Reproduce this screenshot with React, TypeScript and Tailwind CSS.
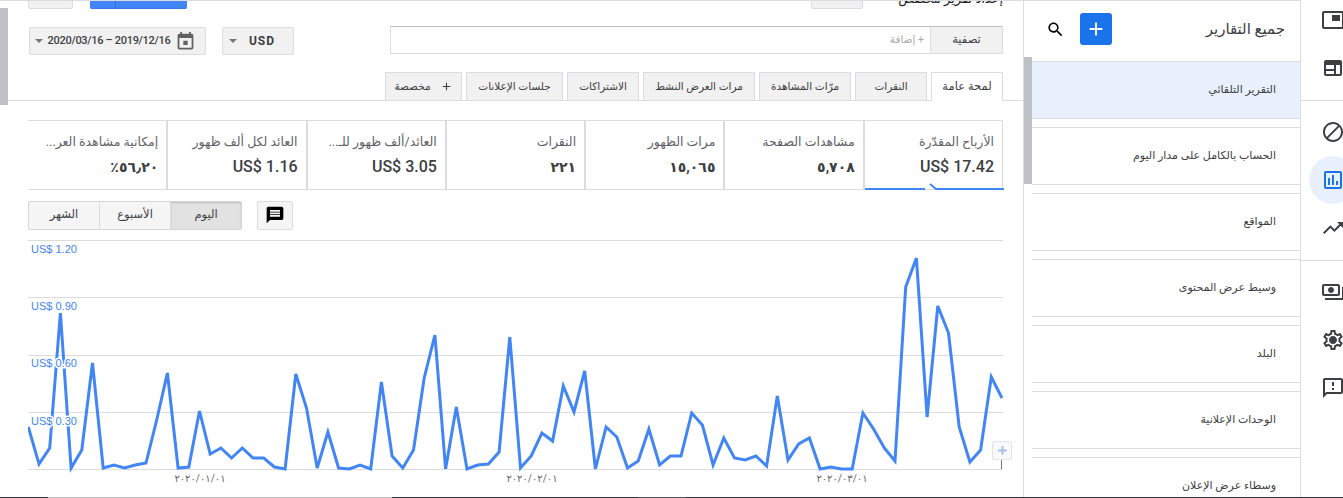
import React from 'react';

const ys = [
  427, 464, 448, 313, 468, 450, 363, 468, 465, 468, 465, 463, 420, 373, 468, 467, 411, 454, 448, 458, 448, 458, 458,
  467, 469, 374, 408, 468, 432, 468, 469, 465, 469, 382, 456, 468, 450, 378, 335, 469, 407, 469, 465, 464, 452, 337,
  468, 456, 433, 441, 386, 412, 371, 469, 427, 437, 468, 461, 429, 465, 456, 456, 413, 425, 465, 438, 458, 460, 456,
  466, 396, 460, 444, 438, 469, 467, 469, 469, 413, 429, 448, 461, 287, 258, 417, 306, 333, 427, 462, 450, 377, 398,
];
const linePoints = ys.map((y, i) => `${(28.3 + i * 10.7).toFixed(1)},${y}`).join(' ');

const tabs = [
  { label: 'لمحة عامة', w: 'w-[72px]', active: true },
  { label: 'النقرات', w: 'w-[72px]' },
  { label: 'مرّات المشاهدة', w: 'w-[92px]' },
  { label: 'مرات العرض النشط', w: 'w-[112px]' },
  { label: 'الاشتراكات', w: 'w-[72px]' },
  { label: 'جلسات الإعلانات', w: 'w-[97px]' },
];

const metrics = [
  { title: 'الأرباح المقدّرة', value: 'US$ 17.42', active: true },
  { title: 'مشاهدات الصفحة', value: '٥,٧٠٨', arabic: true },
  { title: 'مرات الظهور', value: '١٥,٠٦٥', arabic: true },
  { title: 'النقرات', value: '٢٢١', arabic: true },
  { title: 'العائد/ألف ظهور للـ...', value: 'US$ 3.05' },
  { title: 'العائد لكل ألف ظهور', value: 'US$ 1.16' },
  { title: 'إمكانية مشاهدة العر...', value: '٪٥٦٫٢٠', arabic: true },
];

const reports = [
  'التقرير التلقائي',
  'الحساب بالكامل على مدار اليوم',
  'المواقع',
  'وسيط عرض المحتوى',
  'البلد',
  'الوحدات الإعلانية',
  'وسطاء عرض الإعلان',
];

const Icon: React.FC<{ d: string; className?: string; evenodd?: boolean }> = ({ d, className, evenodd }) => (
  <svg viewBox="0 0 24 24" className={className} fill="currentColor">
    <path d={d} fillRule={evenodd ? 'evenodd' : undefined} />
  </svg>
);

const railTop = [
  'M19 7h-8v6h8V7zm2-4H3c-1.1 0-2 .9-2 2v14c0 1.1.9 1.98 2 1.98h18c1.1 0 2-.88 2-1.98V5c0-1.1-.9-2-2-2zm0 16.01H3V4.98h18v14.03z',
  'M19 4H5c-1.1 0-2 .9-2 2v12c0 1.1.9 2 2 2h14c1.1 0 2-.9 2-2V6c0-1.1-.9-2-2-2zM5 9h8v4H5zm0 6h8v3H5zm10-6h4v9h-4z',
];
const railMid = [
  'M12 2C6.48 2 2 6.48 2 12s4.48 10 10 10 10-4.48 10-10S17.52 2 12 2zM4 12c0-4.42 3.58-8 8-8 1.85 0 3.55.63 4.9 1.69L5.69 16.9C4.63 15.55 4 13.85 4 12zm8 8c-1.85 0-3.55-.63-4.9-1.69L18.31 7.1C19.37 8.45 20 10.15 20 12c0 4.42-3.58 8-8 8z',
  'M19 3H5c-1.1 0-2 .9-2 2v14c0 1.1.9 2 2 2h14c1.1 0 2-.9 2-2V5c0-1.1-.9-2-2-2zm0 16H5V5h14v14zM7 10h2v7H7zm4-3h2v10h-2zm4 6h2v4h-2z',
  'M16 6l2.29 2.29-4.88 4.88-4-4L2 16.59 3.41 18l6-6 4 4 6.3-6.29L22 12V6z',
];
const railBottom = [
  'M19 14V6c0-1.1-.9-2-2-2H3c-1.1 0-2 .9-2 2v8c0 1.1.9 2 2 2h14c1.1 0 2-.9 2-2zm-2 0H3V6h14v8zm-7-7c-1.66 0-3 1.34-3 3s1.34 3 3 3 3-1.34 3-3-1.34-3-3-3zm13 0v11c0 1.1-.9 2-2 2H4v-2h17V7h2z',
  'M19.43 12.98c.04-.32.07-.64.07-.98 0-.34-.03-.66-.07-.98l2.11-1.65c.19-.15.24-.42.12-.64l-2-3.46c-.09-.16-.26-.25-.44-.25-.06 0-.12.01-.17.03l-2.49 1c-.52-.4-1.08-.73-1.69-.98l-.38-2.65C14.46 2.18 14.25 2 14 2h-4c-.25 0-.46.18-.49.42l-.38 2.65c-.61.25-1.17.59-1.69.98l-2.49-1c-.06-.02-.12-.03-.18-.03-.17 0-.34.09-.43.25l-2 3.46c-.13.22-.07.49.12.64l2.11 1.65c-.04.32-.07.65-.07.98 0 .33.03.66.07.98l-2.11 1.65c-.19.15-.24.42-.12.64l2 3.46c.09.16.26.25.44.25.06 0 .12-.01.17-.03l2.49-1c.52.4 1.08.73 1.69.98l.38 2.65c.03.24.24.42.49.42h4c.25 0 .46-.18.49-.42l.38-2.65c.61-.25 1.17-.59 1.69-.98l2.49 1c.06.02.12.03.18.03.17 0 .34-.09.43-.25l2-3.46c.12-.22.07-.49-.12-.64l-2.11-1.65zm-1.98-1.71c.04.31.05.52.05.73 0 .21-.02.43-.05.73l-.14 1.13.89.7 1.08.84-.7 1.21-1.27-.51-1.04-.42-.9.68c-.43.32-.84.56-1.25.73l-1.06.43-.16 1.13-.2 1.35h-1.4l-.19-1.35-.16-1.13-1.06-.43c-.43-.18-.83-.41-1.23-.71l-.91-.7-1.06.43-1.27.51-.7-1.21 1.08-.84.89-.7-.14-1.13c-.03-.31-.05-.54-.05-.74s.02-.43.05-.73l.14-1.13-.89-.7-1.08-.84.7-1.21 1.27.51 1.04.42.9-.68c.43-.32.84-.56 1.25-.73l1.06-.43.16-1.13.2-1.35h1.39l.19 1.35.16 1.13 1.06.43c.43.18.83.41 1.23.71l.91.7 1.06-.43 1.27-.51.7 1.21-1.07.85-.89.7.14 1.13zM12 8c-2.21 0-4 1.79-4 4s1.79 4 4 4 4-1.79 4-4-1.79-4-4-4z',
  'M20 2H4c-1.1 0-1.99.9-1.99 2L2 22l4-4h14c1.1 0 2-.9 2-2V4c0-1.1-.9-2-2-2zm0 14H5.17L4 17.17V4h16v12zm-9-4h2v2h-2zm0-6h2v4h-2z',
];

const Rail = () => (
  <div dir="ltr" className="w-[43px] shrink-0 overflow-hidden text-[#3c4043] border-l border-[#dadce0]">
    <div className="pl-[8px] -mt-[4px] pb-[8px] border-b border-[#dadce0]">
      {railTop.map((d, i) => (
        <div key={i} className="w-12 h-12 flex items-center justify-center">
          <Icon d={d} evenodd className="w-6 h-6 shrink-0" />
        </div>
      ))}
    </div>
    <div className="pl-[8px] pt-[7px] pb-[8px] border-b border-[#dadce0]">
      {railMid.map((d, i) => (
        <div
          key={i}
          className={
            i === 1
              ? 'w-12 h-12 flex items-center justify-center rounded-full bg-[#e8f0fe] text-[#1a73e8]'
              : 'w-12 h-12 flex items-center justify-center'
          }
        >
          <Icon d={d} className="w-6 h-6 shrink-0" />
        </div>
      ))}
    </div>
    <div className="pl-[8px] pt-[7px]">
      {railBottom.map((d, i) => (
        <div key={i} className="w-12 h-12 flex items-center justify-center">
          <Icon d={d} className="w-6 h-6 shrink-0" />
        </div>
      ))}
    </div>
  </div>
);

const ReportsPanel = () => (
  <div className="w-[276px] shrink-0 border-t border-[#dadce0] relative overflow-hidden">
    <div className="h-[60px] flex items-center justify-between pr-[15px] pl-[22px] pb-[4px]">
      <span className="text-[15px] text-[#3c4043]">جميع التقارير</span>
      <div className="flex items-center gap-[15px]">
        <button className="w-[32px] h-[32px] rounded-[3px] bg-[#1a73e8] text-white flex items-center justify-center">
          <Icon d="M19 13h-6v6h-2v-6H5v-2h6V5h2v6h6v2z" className="w-[22px] h-[22px]" />
        </button>
        <Icon
          d="M15.5 14h-.79l-.28-.27C15.41 12.59 16 11.11 16 9.5 16 5.91 13.09 3 9.5 3S3 5.91 3 9.5 5.91 16 9.5 16c1.61 0 3.09-.59 4.23-1.57l.27.28v.79l5 4.99L20.49 19l-4.99-5zm-6 0C7.01 14 5 11.99 5 9.5S7.01 5 9.5 5 14 7.01 14 9.5 11.99 14 9.5 14z"
          className="w-[19px] h-[19px] text-black"
        />
      </div>
    </div>
    <div className="ml-[8px] flex flex-col gap-[8px]">
      {reports.map((r, i) => (
        <div
          key={r}
          className={
            i === 0
              ? 'h-[58px] shrink-0 flex items-center pr-[24px] text-[11px] text-[#3c4043] border-y border-[#dadce0] bg-[#e8f0fe]'
              : 'h-[58px] shrink-0 flex items-center pr-[24px] text-[11px] text-[#3c4043] border-y border-[#dadce0]'
          }
        >
          {r}
        </div>
      ))}
    </div>
    <div className="absolute left-0 top-[56px] w-[8px] h-[127px] bg-[#bdc1c6]" />
  </div>
);

const Caret = () => (
  <svg viewBox="0 0 8 4" className="w-[8px] h-[4px] shrink-0 text-[#757575]" fill="currentColor">
    <polygon points="0,0 8,0 4,4" />
  </svg>
);

const grayBtn = 'bg-[#f1f1f1] border border-[#dadce0] rounded-[2px]';

const FilterRow = () => (
  <div className="mt-[17px] pr-[20px] pl-[29px] flex justify-between items-start h-[29px]">
    <div className="flex w-[613px] h-[28px] border border-[#dadce0] border-t-[#bdbdbd] rounded-[1px]">
      <div className="w-[72px] shrink-0 bg-[#f1f1f1] border-l border-[#dadce0] flex items-center justify-center text-[11.5px] text-[#3c4043]">
        تصفية
      </div>
      <div className="flex items-center pr-[6px] text-[10.5px] text-[#aaaaaa]">+ إضافة</div>
    </div>
    <div className="flex gap-[16px] mt-px">
      <button className={`${grayBtn} w-[72px] h-[28px] flex items-center justify-between pr-[18px] pl-[6px]`}>
        <span className="text-[12px] font-bold tracking-[1px] text-[#3c4043]">USD</span>
        <Caret />
      </button>
      <button className={`${grayBtn} w-[177px] h-[28px] flex items-center justify-between pr-[9px] pl-[5px]`}>
        <Icon
          d="M9.5 11h5v5h-5zM16 1v2H8V1H6v2H5c-1.11 0-1.99.9-1.99 2L3 19c0 1.1.89 2 2 2h14c1.1 0 2-.9 2-2V5c0-1.1-.9-2-2-2h-1V1h-2zm3 18H5V8h14v11z"
          className="w-[21px] h-[21px] text-[#616161] shrink-0"
        />
        <span dir="ltr" className="text-[11px] font-medium tracking-[-0.3px] text-[#3c4043] whitespace-nowrap">
          2020/03/16 – 2019/12/16
        </span>
        <Caret />
      </button>
    </div>
  </div>
);

const Tabs = () => (
  <div className="mt-[17px] h-[29px] pr-[20px] flex items-start gap-[4px] border-b border-[#dadce0]">
    {tabs.map((t) => (
      <div
        key={t.label}
        className={
          t.active
            ? `${t.w} h-[29px] shrink-0 bg-white border-x border-t border-[#dadce0] flex items-center justify-center text-[11.5px] text-[#3c4043]`
            : `${t.w} h-[28px] shrink-0 bg-[#f1f1f1] border-x border-t border-[#dadce0] flex items-center justify-center text-[10.5px] text-[#3c4043] whitespace-nowrap`
        }
      >
        {t.label}
      </div>
    ))}
    <div className="w-[77px] h-[28px] shrink-0 bg-[#f1f1f1] border-x border-t border-[#dadce0] flex items-center justify-center gap-[9px] text-[10.5px] text-[#3c4043]">
      <Icon d="M19 13h-6v6h-2v-6H5v-2h6V5h2v6h6v2z" className="w-[13px] h-[13px]" />
      مخصصة
    </div>
  </div>
);

const Metrics = () => (
  <div className="mt-[19px] mr-[20px] ml-[28px] grid grid-cols-7 h-[70px] border-y border-[#dadce0]">
    {metrics.map((m) => (
      <div key={m.title} className="relative border-r border-l last:border-l-0 border-[#dadce0] pt-[11px] pr-[8px] pl-[8px] min-w-0">
        <div className="truncate text-[12.5px] leading-[20px] text-[#5f6368]">{m.title}</div>
        <div
          dir="ltr"
          className={
            m.arabic
              ? 'mt-[4px] text-right text-[14px] leading-[22px] font-bold text-[#3c4043]'
              : 'mt-[4px] text-right text-[16px] leading-[22px] font-medium text-[#3c4043]'
          }
        >
          {m.value}
        </div>
        {m.active && (
          <svg viewBox="0 0 139 7" className="absolute left-0 bottom-[-1px] w-[139px] h-[7px] text-[#4285f4]" fill="none" stroke="currentColor" strokeWidth="2">
            <path d="M0 6H60M65 1L71 6H139" />
          </svg>
        )}
      </div>
    ))}
  </div>
);

const Controls = () => (
  <div className="mt-[10px] pr-[730px] pl-[28px] flex items-center h-[30px] gap-[15px]">
    <button className="w-[36px] h-[29px] shrink-0 bg-[#f5f5f5] border border-[#dadce0] rounded-[2px] flex items-center justify-center">
      <Icon
        d="M20 2H4c-1.1 0-1.99.9-1.99 2L2 22l4-4h14c1.1 0 2-.9 2-2V4c0-1.1-.9-2-2-2zm-2 12H6v-2h12v2zm0-3H6V9h12v2zm0-3H6V6h12v2z"
        className="w-[20px] h-[20px] text-black"
      />
    </button>
    <div className="flex h-[29px] w-[214px] shrink-0 border border-[#d6d6d6] rounded-[2px] text-[11.5px] text-[#3c4043]">
      <div className="flex-1 flex items-center justify-center bg-[#e2e2e2] shadow-[inset_0_1px_2px_rgba(0,0,0,0.15)]">اليوم</div>
      <div className="flex-1 flex items-center justify-center bg-[#f5f5f5] border-r border-[#dadce0]">الأسبوع</div>
      <div className="flex-1 flex items-center justify-center bg-[#f5f5f5] border-r border-[#dadce0]">الشهر</div>
    </div>
  </div>
);

const Chart = () => (
  <div dir="ltr" className="mt-[10px] mr-[20px] ml-[28px] relative h-[256px]">
    <svg viewBox="28 240 975 256" className="block w-[975px] h-[256px]">
      {[240.5, 297.5, 355.5, 412.5, 469.5].map((y) => (
        <line key={y} x1="28" x2="1003" y1={y} y2={y} stroke="#dcdcdc" strokeWidth="1" />
      ))}
      <polyline points={linePoints} fill="none" stroke="#4285f4" strokeWidth="3" strokeLinejoin="miter" />
      {[
        ['US$ 1.20', 253],
        ['US$ 0.90', 310],
        ['US$ 0.60', 367],
        ['US$ 0.30', 425],
      ].map(([t, y]) => (
        <text
          key={t}
          x="31"
          y={y}
          className="font-['Liberation_Sans',sans-serif] text-[11px] fill-[#4285f4] stroke-white stroke-[3px] [paint-order:stroke]"
        >
          {t}
        </text>
      ))}
      {[
        ['٢٠٢٠/٠١/٠١', 200],
        ['٢٠٢٠/٠٢/٠١', 532],
        ['٢٠٢٠/٠٣/٠١', 842],
      ].map(([t, x]) => (
        <text key={t} x={x} y="482" textAnchor="middle" className="text-[10px] tracking-[0.5px] fill-[#666666]">
          {t}
        </text>
      ))}
      <line x1="1001.5" x2="1001.5" y1="459" y2="469" stroke="#777777" />
    </svg>
    <button className="absolute left-[964px] top-[201px] w-[20px] h-[19px] bg-[#f8f9fa] border border-[#e4e4e4] rounded-[2px] flex items-center justify-center text-[#a9c1e2]">
      <Icon d="M20 14h-6v6h-4v-6H4v-4h6V4h4v6h6v4z" className="w-[13px] h-[13px]" />
    </button>
  </div>
);

const Main = () => (
  <div className="w-[1024px] shrink-0 border-t border-r border-[#dadce0] relative overflow-hidden">
    <div className="h-[8px] pr-[20px] pl-[28px] flex justify-between overflow-hidden">
      <div className="flex items-end gap-[30px]">
        <span className="w-[110px] shrink-0 text-[13px] leading-[10px] mb-[5px] text-[#202124] whitespace-nowrap">إعداد تقرير مخصص</span>
        <div className={`${grayBtn} w-[52px] h-[20px] shrink-0`} />
      </div>
      <div className="flex items-end gap-[17px]">
        <div className="w-[97px] h-[20px] rounded-[2px] bg-[#4285f4] border-b border-[#3b78e7] flex justify-end">
          <div className="w-[26px] border-r border-[#2f6fdc]" />
        </div>
        <div className={`${grayBtn} w-[45px] h-[20px]`} />
      </div>
    </div>
    <FilterRow />
    <Tabs />
    <Metrics />
    <Controls />
    <Chart />
    <div className="absolute left-0 top-[7px] w-[8px] h-[97px] bg-[#bdc1c6]" />
  </div>
);

export default function App() {
  return (
    <div dir="rtl" className="w-[1343px] h-[498px] overflow-hidden bg-white flex flex-col font-[Roboto,'DejaVu_Sans',sans-serif]">
      <div className="h-[497px] flex shrink-0">
        <Rail />
        <ReportsPanel />
        <Main />
      </div>
      <div dir="ltr" className="h-px flex shrink-0 bg-[#2b3137]">
        <div className="w-[48px]" />
        <div className="w-[344px] bg-[#bdbdbd]" />
        <div className="w-[246px]" />
        <div className="w-[48px] bg-[#55595e]" />
      </div>
    </div>
  );
}
